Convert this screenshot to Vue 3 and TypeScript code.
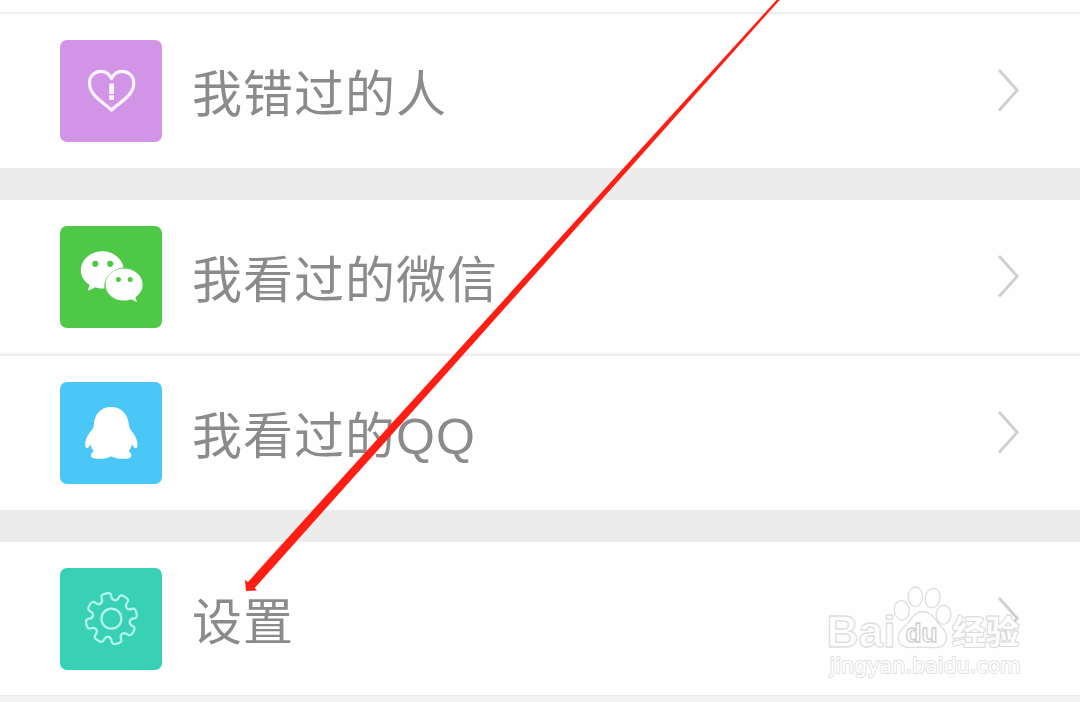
<script setup lang="ts">
interface Item {
  label: string
  icon: 'heart' | 'chat' | 'penguin' | 'gear'
  color: string
}

const groups: Item[][] = [
  [{ label: '我错过的人', icon: 'heart', color: '#d294e7' }],
  [
    { label: '我看过的微信', icon: 'chat', color: '#4ec846' },
    { label: '我看过的QQ', icon: 'penguin', color: '#4ac6f7' },
  ],
  [{ label: '设置', icon: 'gear', color: '#38d1b5' }],
]

type Point = [number, number]

// Eight-toothed outline with rounded corners, centred on the tile.
function gearOutline(): string {
  const points: Point[] = []
  for (let i = 0; i < 8; i++) {
    const base = -103 + i * 45
    const corners: Point[] = [[18.8, -13.5], [26.2, -12], [26.2, 12], [18.8, 13.5]]
    for (const [r, offset] of corners) {
      const a = ((base + offset) * Math.PI) / 180
      points.push([51.4 + r * Math.cos(a), 50.6 + r * Math.sin(a)])
    }
  }
  const toward = (from: Point, to: Point): string => {
    const length = Math.hypot(to[0] - from[0], to[1] - from[1])
    const t = Math.min(4.6, length / 2) / length
    return `${(from[0] + (to[0] - from[0]) * t).toFixed(2)} ${(from[1] + (to[1] - from[1]) * t).toFixed(2)}`
  }
  return points
    .map((p, i) => {
      const prev = points[(i + points.length - 1) % points.length]
      const next = points[(i + 1) % points.length]
      return `${i ? 'L' : 'M'}${toward(p, prev)}Q${p[0].toFixed(2)} ${p[1].toFixed(2)} ${toward(p, next)}`
    })
    .join('') + 'Z'
}

const gear = gearOutline()
</script>

<template>
  <main class="page">
    <section v-for="(group, g) in groups" :key="g" class="group">
      <div v-for="item in group" :key="item.label" class="row">
        <svg class="tile" viewBox="0 0 102 102" :style="{ backgroundColor: item.color }">
          <g v-if="item.icon === 'heart'">
            <path class="line heart" d="M51.5 70C43 62 29.5 55.5 29.5 43C29.5 35.5 35 31.3 41 31.3C46 31.3 49.5 34.3 51.5 38.5C53.5 34.3 57 31.3 62 31.3C68 31.3 73.8 35.5 73.8 43C73.8 55.5 60 62 51.5 70Z" />
            <path class="solid faint" d="M49.2 43.5h4.8v10.5h-4.8zM49.2 55.3h4.8v4.7h-4.8z" />
          </g>
          <g v-else-if="item.icon === 'chat'">
            <path class="solid" d="M42.5 25.3C30.5 25.3 20.8 33.7 20.8 44.3C20.8 50.2 24 55.5 29.5 58.8L28 64.8L35.3 61.3C38 62.3 41 62.8 44.5 62.5C43 52 51 43.5 63.6 41.2C61.5 32 52.8 25.3 42.5 25.3Z" />
            <path class="solid" d="M64 42.6C53.8 42.6 45.5 49.7 45.5 58.7C45.5 67.8 53.8 74.6 64 74.6C66.8 74.6 69.1 74.2 71.4 73.3L77 76.2L75.4 71.2C79.8 68.1 82.6 64 82.6 58.7C82.6 49.7 74.3 42.6 64 42.6Z" />
            <g :fill="item.color">
              <circle cx="35.3" cy="37.8" r="3.1" />
              <circle cx="50.2" cy="37.8" r="3.1" />
              <circle cx="58.4" cy="53.4" r="2.5" />
              <circle cx="70.2" cy="53.4" r="2.5" />
            </g>
          </g>
          <path v-else-if="item.icon === 'penguin'" class="solid" d="M51.2 25C40.5 25 34.2 32.5 33.8 43.5C33.5 46.5 31.8 47.8 30.2 50C26.5 54.5 25 59 25.2 63C25.4 65.8 26.5 66.8 27.8 65.8C29 65 29.8 63.8 30.6 62.2C31.1 64.8 32 67 33.8 69.2C31.3 70.4 30.4 72.8 31.3 74.8C32.5 77 37 76.8 40.5 76.8C45.5 76.7 48.5 75.8 51.3 74.2C54 75.8 57 76.7 62 76.8C65.5 76.9 70 76.9 71.1 74.8C72 72.8 71 70.4 68.6 69.2C70.4 67 71.4 64.8 72 62.2C72.8 63.8 73.6 65 74.8 65.8C76.3 66.8 77.4 65.8 77.5 63C77.6 59 75.8 54.5 72.3 50C70.8 47.8 69.3 46.5 69 43.5C68.2 32.5 61.8 25 51.2 25Z" />
          <g v-else>
            <path class="line cog" :d="gear" />
            <circle class="line cog" cx="51.4" cy="50.7" r="10" />
          </g>
        </svg>
        <span class="label">{{ item.label }}</span>
        <svg class="chevron" viewBox="0 0 24 46">
          <path d="M3 2L21.3 22.3L3 42.5" />
        </svg>
      </div>
    </section>

    <svg class="overlay" viewBox="0 0 1080 702">
      <g class="mark">
        <text class="latin" x="826.5" y="646.5" font-size="45" textLength="69" lengthAdjust="spacingAndGlyphs">Bai</text>
        <ellipse cx="901.8" cy="610.3" rx="7.5" ry="9.8" transform="rotate(-8 901.8 610.3)" />
        <ellipse cx="915.3" cy="596.8" rx="7.2" ry="9.8" />
        <ellipse cx="932.5" cy="598" rx="7.4" ry="9.8" transform="rotate(12 932.5 598)" />
        <ellipse cx="943.5" cy="614.7" rx="7.4" ry="9.6" />
        <path d="M922.5 611.5C931 611.5 934 618 938 623C943 628.5 947 632 946.6 638C946 645 941 648.2 934 647.6C926 646.8 920 646.8 912 647.6C904 648.2 898.5 645 898.3 638C898.2 632 903 628 907.5 623.5C911.5 619 914.5 611.5 922.5 611.5Z" />
        <text class="latin du" x="905.5" y="641.5" font-size="26" textLength="32" lengthAdjust="spacingAndGlyphs">du</text>
        <text class="han" x="952" y="643.5" font-size="33" textLength="67" lengthAdjust="spacingAndGlyphs">经验</text>
        <text class="site" x="829.5" y="672.5" font-size="22" textLength="191" lengthAdjust="spacingAndGlyphs">jingyan.baidu.com</text>
      </g>
      <path class="arrow" d="M776.5 0L779.7 0L637 160L466.5 351L333.3 500L254.7 588L257 590.5L246 591L245 580L248 582L322 500L457.5 351L634 156.5Z" />
    </svg>
  </main>
</template>

<style>
body {
  overflow: hidden;
}
</style>

<style scoped>
.page {
  position: relative;
  box-sizing: border-box;
  width: 1080px;
  height: 702px;
  padding-top: 12px;
  overflow: hidden;
  background: #fefefe;
  font-family: "Liberation Sans", "Noto Sans CJK SC", sans-serif;
}
.group {
  border-top: 32px solid #ececec;
}
.group:first-child {
  border-top: 2px solid #eee;
  box-shadow: inset 0 1px #f8f8f8;
}
.group:last-of-type {
  border-bottom: 8px solid #f4f4f4;
  box-shadow: inset 0 -1px #ececec;
}
.row {
  display: flex;
  align-items: center;
  box-sizing: border-box;
  height: 154px;
  padding: 0 60px;
}
.row + .row {
  height: 156px;
  border-top: 2px solid #eee;
  box-shadow: 0 -1px #f6f6f6;
}
.tile {
  flex: none;
  width: 102px;
  height: 102px;
  border-radius: 7px;
}
.label {
  flex: 1;
  margin-top: 7px;
  margin-left: 30px;
  color: #8b8b8b;
  font-size: 50px;
  letter-spacing: 1px;
  line-height: 76px;
  white-space: nowrap;
}
.chevron {
  flex: none;
  width: 24px;
  height: 46px;
  fill: none;
  stroke: #cfcfcf;
  stroke-width: 2.8;
}
.solid {
  fill: #fff;
}
.faint {
  opacity: 0.9;
}
.line {
  fill: none;
  stroke: #fff;
  stroke-linejoin: round;
}
.heart {
  stroke: #fdf4ff;
  stroke-width: 3.2;
}
.cog {
  stroke: #b4f8ec;
  stroke-width: 2.2;
}
.overlay {
  position: absolute;
  inset: 0;
  width: 1080px;
  height: 702px;
  pointer-events: none;
}
.arrow {
  fill: #ff1e14;
}
.mark {
  fill: #fefefe;
  stroke: #dedede;
  stroke-width: 1.3;
  stroke-linejoin: round;
}
.latin {
  font-family: "Liberation Sans", Arial, sans-serif;
  font-weight: 700;
}
.du {
  stroke: #cfcfcf;
}
.han {
  font-family: "Noto Sans CJK SC", sans-serif;
  font-weight: 700;
  paint-order: stroke;
  stroke: #dadada;
  stroke-width: 2.2;
}
.site {
  font-family: "DejaVu Sans", sans-serif;
  font-weight: 400;
  paint-order: stroke;
  stroke-width: 2;
  stroke: #e2e2e2;
}
</style>
